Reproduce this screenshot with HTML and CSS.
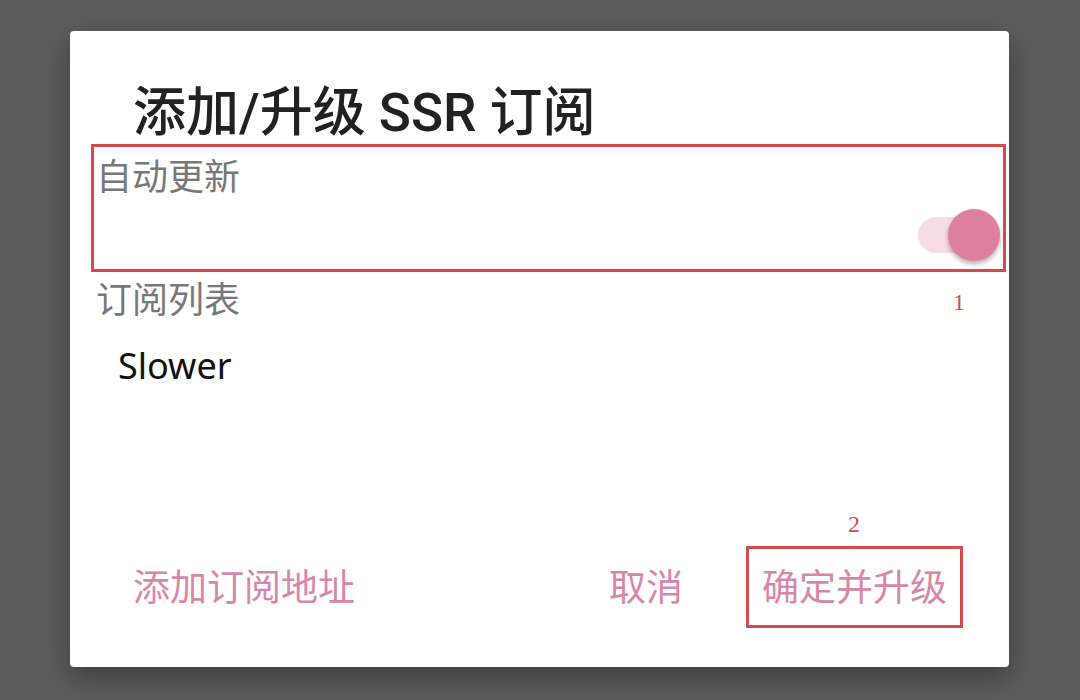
FILE: index.html
```html
<!DOCTYPE html>
<html lang="zh-CN">
<head>
<meta charset="utf-8">
<title>添加/升级 SSR 订阅</title>
<link rel="stylesheet" href="styles.css">
</head>
<body>
<div class="dialog">
  <h1 class="title">添加/升级 SSR 订阅</h1>
  <section class="pref pref-marked">
    <div class="pref-label">自动更新</div>
    <div class="switch-row">
      <div class="switch">
        <span class="track"></span>
        <span class="thumb"></span>
      </div>
    </div>
  </section>
  <div class="list-label">订阅列表</div>
  <div class="list-item">Slower</div>
  <div class="spacer"></div>
  <div class="actions">
    <button class="btn btn-add">添加订阅地址</button>
    <div class="spacer-h"></div>
    <button class="btn btn-cancel">取消</button>
    <button class="btn btn-ok">确定并升级</button>
  </div>
  <span class="mark mark-1">1</span>
  <span class="mark mark-2">2</span>
</div>
</body>
</html>
```
FILE: styles.css
```css
html, body {
  margin: 0;
  padding: 0;
}
body {
  width: 1080px;
  height: 700px;
  background: #5c5c5c;
  padding: 31px 0 0 70px;
  box-sizing: border-box;
  font-family: "Noto Sans", "Noto Sans CJK SC", sans-serif;
  overflow: hidden;
}
.dialog {
  position: relative;
  width: 939px;
  height: 636px;
  background: #ffffff;
  border-radius: 4px;
  box-shadow: 0 10px 30px rgba(0, 0, 0, 0.35);
  display: flex;
  flex-direction: column;
}
.title {
  margin: 56px 0 4px 63px;
  font-family: "Roboto", "Noto Sans CJK SC", sans-serif;
  font-weight: 500;
  font-size: 53px;
  line-height: 53px;
  color: #212121;
}
.pref {
  margin: 0 3px 0 21px;
  height: 128px;
  box-sizing: border-box;
  border: 3px solid #d64a4a;
  display: flex;
  flex-direction: column;
}
.pref-label {
  padding: 9px 0 0 2px;
  font-family: "Noto Sans CJK SC", sans-serif;
  font-size: 36px;
  line-height: 36px;
  color: #787878;
}
.switch-row {
  display: flex;
  justify-content: flex-end;
  margin-top: 17px;
  padding-right: 3px;
}
.switch {
  position: relative;
  width: 82px;
  height: 52px;
}
.track {
  position: absolute;
  left: 0;
  top: 8px;
  width: 72px;
  height: 36px;
  border-radius: 18px;
  background: #f7dce5;
}
.thumb {
  position: absolute;
  right: 0;
  top: 0;
  width: 52px;
  height: 52px;
  border-radius: 50%;
  background: #de7f9f;
  box-shadow: 0 3px 5px rgba(0, 0, 0, 0.3);
}
.list-label {
  margin: 7px 0 0 26px;
  font-family: "Noto Sans CJK SC", sans-serif;
  font-size: 36px;
  line-height: 36px;
  color: #787878;
}
.list-item {
  margin: 33px 0 0 48px;
  font-family: "Noto Sans", sans-serif;
  font-size: 36px;
  line-height: 36px;
  color: #111111;
}
.spacer {
  flex: 1;
}
.actions {
  display: flex;
  align-items: center;
  height: 82px;
  margin: 0 46px 39px 63px;
}
.spacer-h {
  flex: 1;
}
.btn {
  background: none;
  border: none;
  padding: 0 0 4px 0;
  margin: 0;
  font-family: "Noto Sans CJK SC", sans-serif;
  font-size: 37px;
  line-height: 40px;
  color: #d987a9;
  cursor: pointer;
}
.btn-cancel {
  margin-right: 63px;
}
.btn-ok {
  height: 82px;
  box-sizing: border-box;
  border: 3px solid #d64a4a;
  padding: 0 13px 4px 13px;
}
.mark {
  position: absolute;
  font-family: "Liberation Serif", serif;
  font-size: 24px;
  line-height: 24px;
  color: #d24c4c;
}
.mark-1 {
  left: 883px;
  top: 259px;
}
.mark-2 {
  left: 778px;
  top: 481px;
}
```
